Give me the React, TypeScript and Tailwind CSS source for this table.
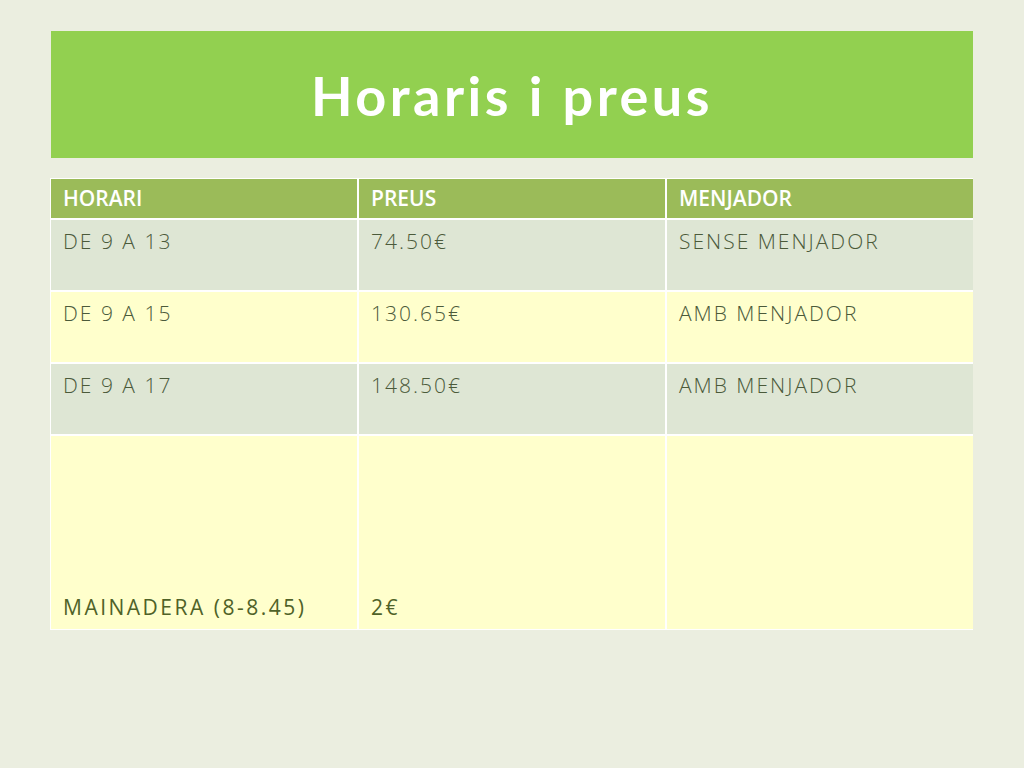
import { Fragment } from "react"

const rows = [
  { horari: "DE 9 A 13", preu: "74.50€", menjador: "SENSE MENJADOR", bg: "bg-[#dee6d4]" },
  { horari: "DE 9 A 15", preu: "130.65€", menjador: "AMB MENJADOR", bg: "bg-[#ffffcc]" },
  { horari: "DE 9 A 17", preu: "148.50€", menjador: "AMB MENJADOR", bg: "bg-[#dee6d4]" },
]

const cell = "px-3 pt-[6px] text-[21px] font-light tracking-[2px] text-[#4b5a3a] [font-family:'Open_Sans',sans-serif]"

export default function App() {
  return (
    <div className="w-[1024px] h-[768px] bg-[#ebeee0] px-[51px] pt-[31px]">
      <div className="w-[922px] h-[127px] bg-[#92d050] flex items-center justify-center">
        <h1 className="text-white font-bold text-[54px] tracking-[3.5px] [font-family:Lato,sans-serif] pt-[2px]">
          Horaris i preus
        </h1>
      </div>

      <div className="mt-[20px] w-[923px] -ml-px bg-white p-px grid grid-cols-[306px_306px_306px] gap-[2px]">
        {["HORARI", "PREUS", "MENJADOR"].map((h) => (
          <div
            key={h}
            className="h-[39px] bg-[#9bbb59] px-3 flex items-center text-white font-semibold text-[21px] [font-family:'Open_Sans',sans-serif]"
          >
            {h}
          </div>
        ))}

        {rows.map((r) => (
          <Fragment key={r.horari}>
            <div className={`h-[70px] ${r.bg} ${cell}`}>{r.horari}</div>
            <div className={`h-[70px] ${r.bg} ${cell}`}>{r.preu}</div>
            <div className={`h-[70px] ${r.bg} ${cell}`}>{r.menjador}</div>
          </Fragment>
        ))}

        <div className="h-[193px] bg-[#ffffcc] px-3 pb-[6px] flex items-end text-[21px] tracking-[2.5px] text-[#4f6228] [font-family:'Open_Sans',sans-serif]">
          MAINADERA (8-8.45)
        </div>
        <div className="h-[193px] bg-[#ffffcc] px-3 pb-[6px] flex items-end text-[21px] tracking-[2.5px] text-[#4f6228] [font-family:'Open_Sans',sans-serif]">
          2€
        </div>
        <div className="h-[193px] bg-[#ffffcc]"></div>
      </div>
    </div>
  )
}
